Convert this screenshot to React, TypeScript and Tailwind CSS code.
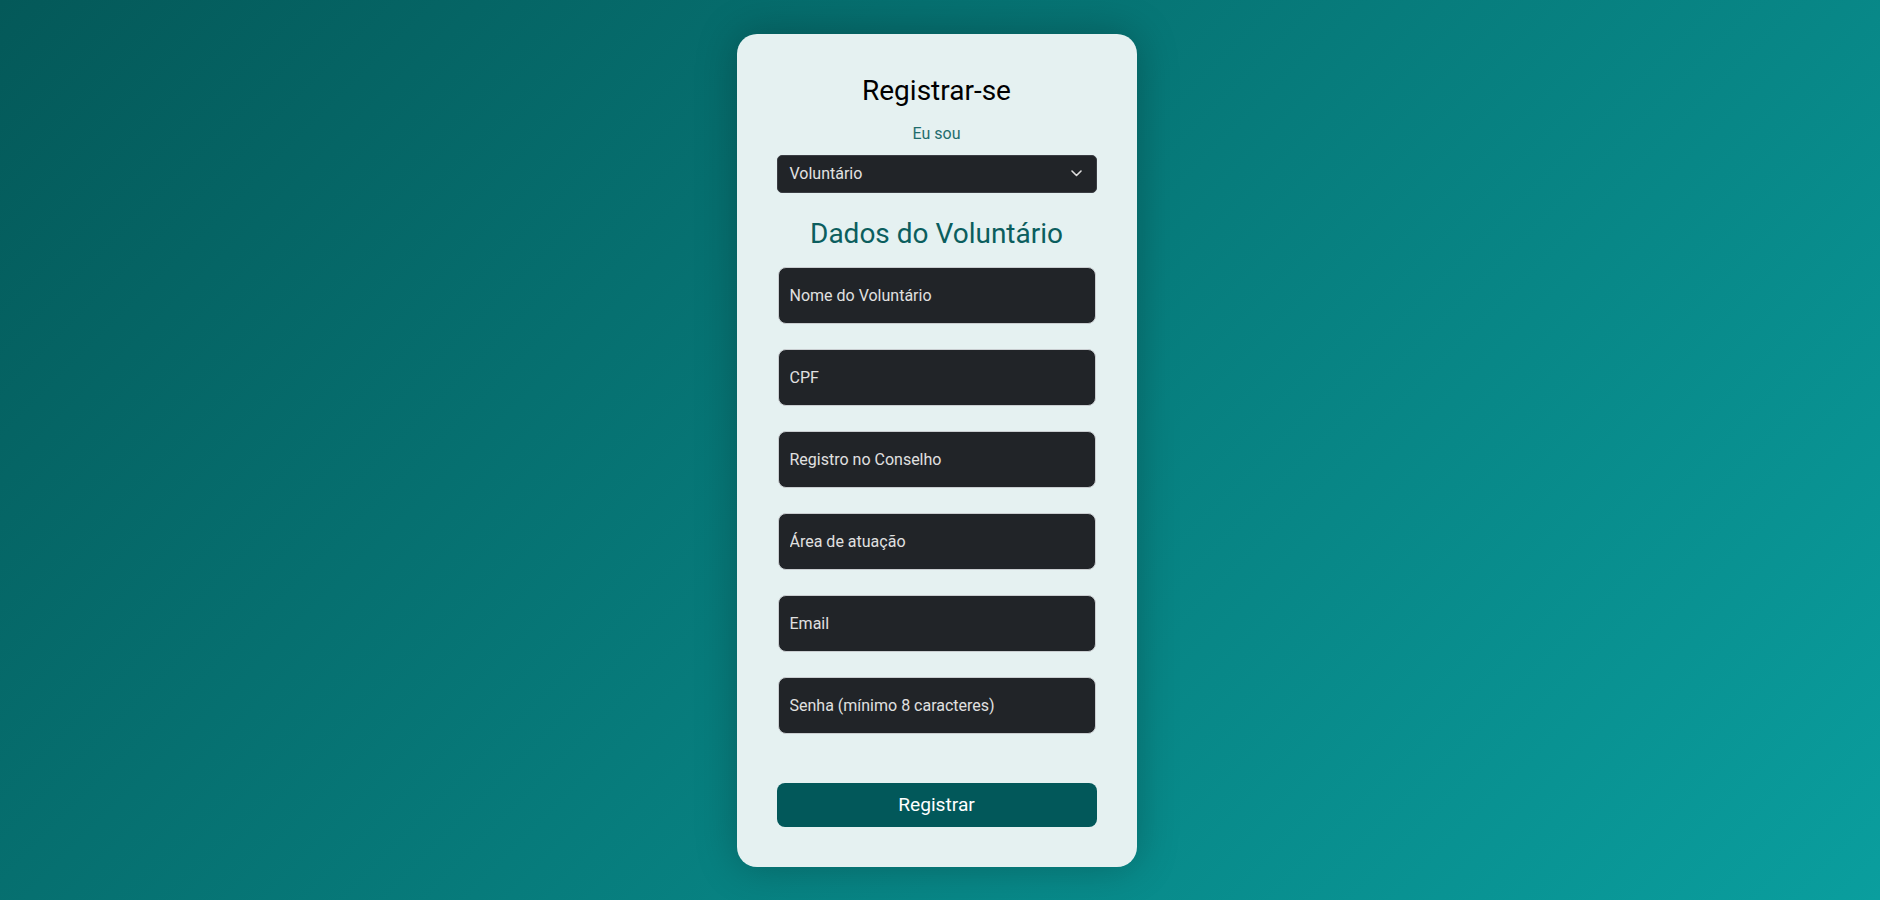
import React from "react";

const fields = [
  "Nome do Voluntário",
  "CPF",
  "Registro no Conselho",
  "Área de atuação",
  "Email",
  "Senha (mínimo 8 caracteres)",
];

export default function App() {
  return (
    <div
      className="min-h-screen w-full flex justify-center items-start pr-[7px] bg-[linear-gradient(135deg,#045959,#0a9e9e)] font-['Roboto',_'Liberation_Sans',_sans-serif]"
    >
      <div className="mt-[34px] w-[400px] rounded-[20px] bg-[#e5f1f1] px-10 pt-10 pb-10 shadow-[0_0_40px_rgba(0,0,0,0.25)] flex flex-col">
        <h2 className="text-center text-[28px] leading-[1.2] text-black font-normal">Registrar-se</h2>
        <p className="mt-[14px] text-center text-[16px] leading-[24px] text-[#1f6d6d]">Eu sou</p>
        <div className="mt-[9px] h-[38px] w-full rounded-[5px] bg-[#212428] border border-[#3b3e44] flex items-center justify-between pl-[12px] pr-[14px]">
          <span className="text-[16px] text-[#e2e2e2]">Voluntário</span>
          <svg width="11" height="7" viewBox="0 0 11 7" fill="none">
            <polyline points="1,1 5.5,5.5 10,1" stroke="#dedede" strokeWidth="1.6" strokeLinecap="round" strokeLinejoin="round" />
          </svg>
        </div>
        <h3 className="mt-6 text-center text-[28px] leading-[1.2] text-[#0b5e5e] font-normal">Dados do Voluntário</h3>
        <div className="mt-[17px] flex flex-col gap-[25px] px-px">
          {fields.map((f) => (
            <input
              key={f}
              placeholder={f}
              className="h-[57px] w-full rounded-[8px] bg-[#212428] border border-[#c9cdd0] px-[11px] text-[16px] text-[#e2e2e2] placeholder:text-[#e0e0e0] outline-none"
            />
          ))}
        </div>
        <button className="mt-[49px] h-[44px] w-full rounded-[8px] bg-[#02585a] text-white text-[19.2px]">
          Registrar
        </button>
      </div>
    </div>
  );
}
